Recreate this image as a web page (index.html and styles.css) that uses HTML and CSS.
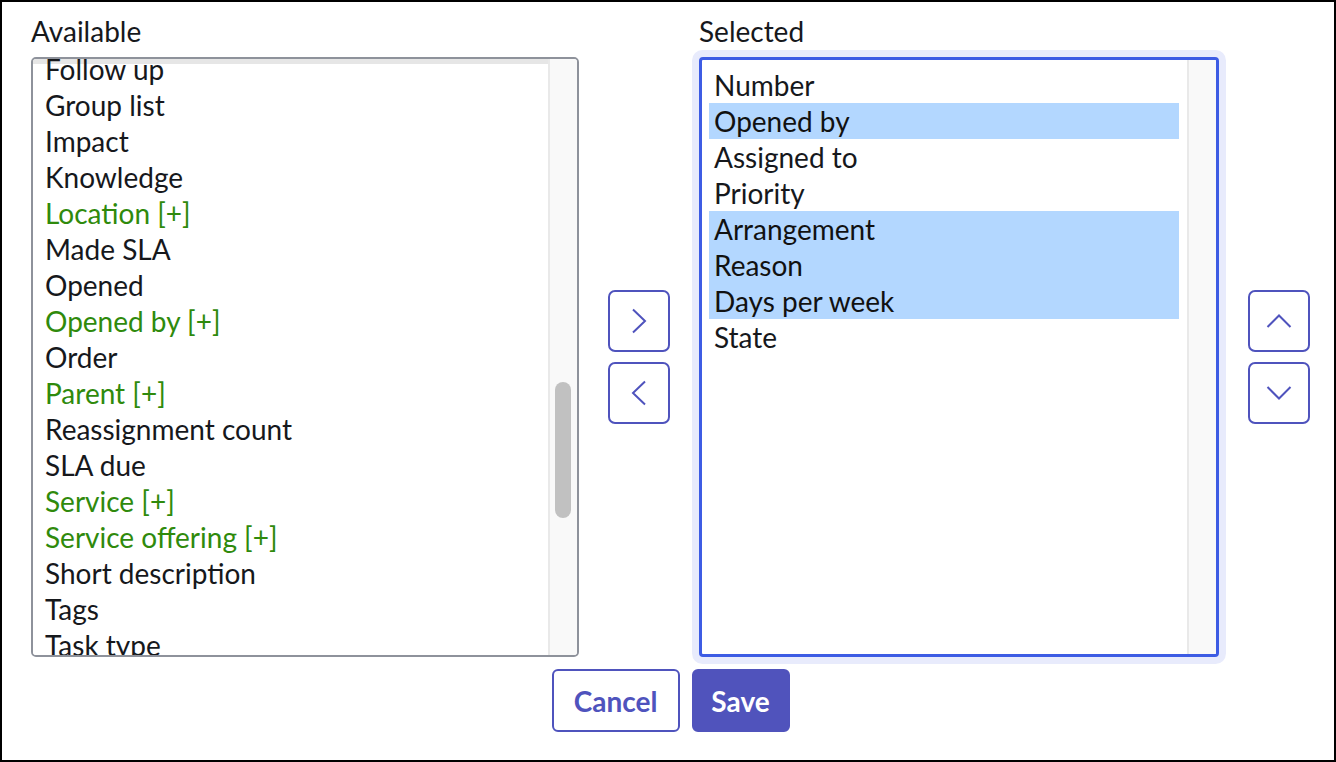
FILE: index.html
```html
<!DOCTYPE html>
<html lang="en">
<head>
<meta charset="utf-8">
<title>Column chooser</title>
<link rel="stylesheet" href="styles.css">
</head>
<body>
<div class="frame">
  <div class="chooser">
    <div class="label">Available</div>
    <div class="spacer"></div>
    <div class="label">Selected</div>
    <div class="spacer"></div>

    <div class="box box-available">
      <div class="list list-available">
        <ul class="items items-scrolled">
          <li>Follow up</li>
          <li>Group list</li>
          <li>Impact</li>
          <li>Knowledge</li>
          <li class="ref">Location [+]</li>
          <li>Made SLA</li>
          <li>Opened</li>
          <li class="ref">Opened by [+]</li>
          <li>Order</li>
          <li class="ref">Parent [+]</li>
          <li>Reassignment count</li>
          <li>SLA due</li>
          <li class="ref">Service [+]</li>
          <li class="ref">Service offering [+]</li>
          <li>Short description</li>
          <li>Tags</li>
          <li>Task type</li>
          <li>Time worked</li>
        </ul>
      </div>
      <div class="track"><div class="thumb"></div></div>
    </div>

    <div class="btn-stack">
      <button class="icon-btn" aria-label="Add">
        <svg width="16" height="26" viewBox="0 0 16 26"><path d="M2 1.5 L14 13 L2 24.5" fill="none" stroke="currentColor" stroke-width="2"/></svg>
      </button>
      <button class="icon-btn" aria-label="Remove">
        <svg width="16" height="26" viewBox="0 0 16 26"><path d="M14 1.5 L2 13 L14 24.5" fill="none" stroke="currentColor" stroke-width="2"/></svg>
      </button>
    </div>

    <div class="box box-selected">
      <div class="list list-selected">
        <ul class="items">
          <li>Number</li>
          <li class="sel">Opened by</li>
          <li>Assigned to</li>
          <li>Priority</li>
          <li class="sel">Arrangement</li>
          <li class="sel">Reason</li>
          <li class="sel">Days per week</li>
          <li>State</li>
        </ul>
      </div>
      <div class="track"></div>
    </div>

    <div class="btn-stack">
      <button class="icon-btn" aria-label="Move up">
        <svg width="26" height="16" viewBox="0 0 26 16"><path d="M1.5 14 L13 2.5 L24.5 14" fill="none" stroke="currentColor" stroke-width="2"/></svg>
      </button>
      <button class="icon-btn" aria-label="Move down">
        <svg width="26" height="16" viewBox="0 0 26 16"><path d="M1.5 2 L13 13.5 L24.5 2" fill="none" stroke="currentColor" stroke-width="2"/></svg>
      </button>
    </div>
  </div>

  <div class="footer">
    <button class="btn btn-cancel">Cancel</button>
    <button class="btn btn-save">Save</button>
  </div>
</div>
</body>
</html>
```

FILE: styles.css
```css
html, body {
  margin: 0;
  padding: 0;
  background: #ffffff;
}

.frame {
  width: 1336px;
  height: 762px;
  box-sizing: border-box;
  border: 2px solid #000000;
  padding: 12px 0 0 29px;
  font-family: Lato, "Liberation Sans", sans-serif;
  color: #16181c;
}

.chooser {
  display: grid;
  grid-template-columns: 548px 62px 520px 62px;
  grid-template-rows: 34px 600px;
  column-gap: 29px;
  row-gap: 9px;
  width: 1279px;
}

.label {
  font-size: 28px;
  line-height: 34px;
  white-space: nowrap;
}

.box {
  display: flex;
  box-sizing: border-box;
  height: 600px;
  overflow: hidden;
  background: #ffffff;
}

.box-available {
  border: 2px solid #8e929b;
  border-radius: 5px;
}

.box-selected {
  border: 3px solid #3d5ce4;
  border-radius: 4px;
  box-shadow: 0 0 0 7px #e8ebfc;
}

.list {
  flex: 1;
  overflow: hidden;
  padding: 7px 8px 0 7px;
}

.list-available {
  background: linear-gradient(#e6e6e6 0, #e6e6e6 5px, #ffffff 5px);
}

.items {
  list-style: none;
  margin: 0;
  padding: 0;
  font-size: 28px;
  line-height: 36px;
}

.items-scrolled {
  margin-top: -15px;
}

.items li {
  padding-left: 5px;
  white-space: nowrap;
}

.items li.ref {
  color: #2f8a0c;
}

.items li.sel {
  background: #b3d7ff;
  color: #111111;
}

.track {
  width: 27px;
  flex: none;
  border-left: 2px solid #e9e9e9;
  background: #f9f9f9;
}

.thumb {
  width: 16px;
  height: 136px;
  margin: 323px 0 0 5px;
  border-radius: 8px;
  background: #c1c1c1;
}

.btn-stack {
  align-self: center;
  display: flex;
  flex-direction: column;
  gap: 10px;
}

.icon-btn {
  width: 62px;
  height: 62px;
  box-sizing: border-box;
  border: 2px solid #4f53bd;
  border-radius: 7px;
  background: #ffffff;
  color: #4f53bd;
  display: flex;
  align-items: center;
  justify-content: center;
  padding: 0;
  cursor: pointer;
}

.footer {
  width: 1279px;
  display: flex;
  justify-content: center;
  gap: 12px;
  margin-top: 12px;
}

.btn {
  height: 63px;
  box-sizing: border-box;
  border-radius: 6px;
  font-family: Lato, "Liberation Sans", sans-serif;
  font-weight: 700;
  font-size: 28px;
  padding: 0;
  cursor: pointer;
}

.btn-cancel {
  width: 128px;
  border: 2px solid #4f53bd;
  background: #ffffff;
  color: #4f53bd;
}

.btn-save {
  width: 98px;
  border: 2px solid #5053bc;
  background: #5053bc;
  color: #ffffff;
}
```
